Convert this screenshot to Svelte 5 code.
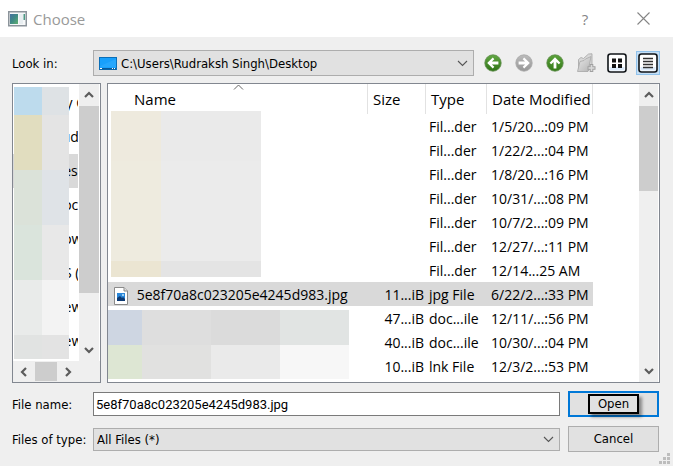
<script>
  const places = ['My C', 'Rud', 'Des', 'Doc', 'Dow', 'OS (', 'New', 'New'];

  const files = [
    { name: '', size: '', type: 'Fil...der', date: '1/5/20...:09 PM' },
    { name: '', size: '', type: 'Fil...der', date: '1/22/2...:04 PM' },
    { name: '', size: '', type: 'Fil...der', date: '1/8/20...:16 PM' },
    { name: '', size: '', type: 'Fil...der', date: '10/31/...:08 PM' },
    { name: '', size: '', type: 'Fil...der', date: '10/7/2...:09 PM' },
    { name: '', size: '', type: 'Fil...der', date: '12/27/...:11 PM' },
    { name: '', size: '', type: 'Fil...der', date: '12/14...25 AM' },
    { name: '5e8f70a8c023205e4245d983.jpg', size: '11...iB', type: 'jpg File', date: '6/22/2...:33 PM', icon: true },
    { name: '', size: '47...iB', type: 'doc...ile', date: '12/11/...:56 PM', icon: true },
    { name: '', size: '40...iB', type: 'doc...ile', date: '10/30/...:04 PM' },
    { name: '', size: '10...iB', type: 'lnk File', date: '12/3/2...:53 PM' },
    { name: '', size: '', type: '', date: '', icon: true }
  ];

  let place = $state(2);
  let selected = $state(7);
  let fileName = $state('5e8f70a8c023205e4245d983.jpg');
</script>

{#snippet arrow(turn)}
  <svg class="arrow" width="12" height="12" viewBox="0 0 12 12" aria-hidden="true">
    <path d="M2 8 L6 4 L10 8" fill="none" stroke="#5c5c5c" stroke-width="2.2" transform="rotate({turn} 6 6)" />
  </svg>
{/snippet}

{#snippet chevron()}
  <svg class="chevron" width="11" height="7" viewBox="0 0 11 7" aria-hidden="true">
    <path d="M1 1 L5.5 5.5 L10 1" fill="none" stroke="#555" stroke-width="1.1" />
  </svg>
{/snippet}

{#snippet ball(light, dark, edge, turn)}
  <svg width="20" height="20" viewBox="0 0 20 20" aria-hidden="true">
    <defs>
      <linearGradient id="ball{turn}" x1="0" y1="0" x2="0" y2="1">
        <stop offset="0" stop-color={light} /><stop offset="1" stop-color={dark} />
      </linearGradient>
    </defs>
    <circle cx="10" cy="10" r="8.2" fill="url(#ball{turn})" stroke={edge} stroke-width="0.8" />
    <path d="M4.2 10 L9.8 4.6 L11.3 6.2 L8.9 8.6 H15.4 V11.4 H8.9 L11.3 13.8 L9.8 15.4 Z" fill="#fff" transform="rotate({turn} 10 10)" />
  </svg>
{/snippet}

<div class="window">
  <header class="titlebar">
    <svg width="19" height="16" viewBox="0 0 19 16" aria-hidden="true">
      <defs>
        <linearGradient id="screen" x1="0" y1="0" x2="1" y2="1">
          <stop offset="0" stop-color="#4470a0" /><stop offset=".5" stop-color="#3e8a84" /><stop offset="1" stop-color="#60b070" />
        </linearGradient>
      </defs>
      <rect x=".75" y=".75" width="17.5" height="14" fill="#f6f8f9" stroke="#8c949b" stroke-width="1.5" />
      <rect x="2" y="3" width="8" height="10" fill="url(#screen)" />
      <rect x="11" y="3" width="4" height="10" fill="#e8eef1" />
      <rect x="15.5" y="3" width="1.5" height="6" fill="#4c9a85" />
    </svg>
    <h1>Choose</h1>
    <button class="caption" aria-label="Help"><span aria-hidden="true">?</span></button>
    <button class="caption" aria-label="Close">
      <svg width="13" height="13" viewBox="0 0 13 13" aria-hidden="true"><path d="M.5 .5 L12.5 12.5 M12.5 .5 L.5 12.5" stroke="#858585" stroke-width="1.1" /></svg>
    </button>
  </header>

  <main>
    <div class="lookin">
      <label for="folder">Look in:</label>
      <div class="combo path">
        <svg class="desk" width="18" height="13" viewBox="0 0 18 13" aria-hidden="true">
          <rect x=".5" y=".5" width="17" height="12" fill="#18a0fb" stroke="#0b6fb8" />
          <path d="M1 9 L17 2 V10 H1 Z" fill="#32adff" opacity=".5" />
          <rect x="1" y="11" width="16" height="1.5" fill="#0a5a98" />
          <path d="M1 11.5 H3 M13 11.5 H14 M15 11.5 H16" stroke="#fff" />
        </svg>
        <select id="folder"><option>C:\Users\Rudraksh Singh\Desktop</option></select>
        {@render chevron()}
      </div>
      <nav class="tools" aria-label="Navigation">
        <button aria-label="Back">{@render ball('#63a844', '#2f7316', '#5f8d4c', 0)}</button>
        <button aria-label="Forward">{@render ball('#bcbcbc', '#979797', '#a8a8a8', 180)}</button>
        <button aria-label="Parent directory">{@render ball('#5ba23b', '#357a19', '#5f8d4c', 90)}</button>
        <button aria-label="Create new folder">
          <svg width="20" height="20" viewBox="0 0 20 20" aria-hidden="true">
            <defs>
              <linearGradient id="fold" x1="0" y1="0" x2="1" y2="1">
                <stop offset="0" stop-color="#e8e8e8" /><stop offset="1" stop-color="#b4b4b4" />
              </linearGradient>
            </defs>
            <path d="M2.5 17.5 V6.5 L5 4.5 L7.5 5.5 L12.5 1 L16 .8 V13 L12 18 Z" fill="#d8d8d8" stroke="#a5a5a5" stroke-width=".8" />
            <path d="M1.5 18.5 L4 8.5 L8 7.5 L9.5 6 L15 3.5 L12 18.5 Z" fill="url(#fold)" stroke="#a8a8a8" stroke-width=".8" />
            <path d="M15.5 11 V19 M11.5 15 H19.5" stroke="#a0a0a0" stroke-width="3.6" />
            <path d="M15.5 12 V18 M12.5 15 H18.5" stroke="#dadada" stroke-width="1.6" />
          </svg>
        </button>
        <button aria-label="List view">
          <svg width="20" height="20" viewBox="0 0 20 20" aria-hidden="true">
            <rect x="1" y="1" width="18" height="18" rx="2.5" fill="#fff" stroke="#101418" stroke-width="1.6" />
            <path d="M2.5 14 H17.5 V17.5 H2.5 Z" fill="#dcebfa" />
            <path d="M5 5.5 h4 v4 h-4 Z M11 5.5 h4 v4 h-4 Z M5 11 h4 v4 h-4 Z M11 11 h4 v4 h-4 Z" fill="#111" />
          </svg>
        </button>
        <button class="on" aria-label="Detail view" aria-pressed="true">
          <svg width="20" height="20" viewBox="0 0 20 20" aria-hidden="true">
            <rect x="1" y="1" width="18" height="18" rx="2.5" fill="#fff" stroke="#101418" stroke-width="1.6" />
            <path d="M2.5 14 H17.5 V17.5 H2.5 Z" fill="#dcebfa" />
            <path d="M5 5.5 H15 M5 8.5 H15 M5 11.5 H15 M5 14.5 H15" stroke="#333" stroke-width="1.5" />
          </svg>
        </button>
      </nav>
    </div>

    <div class="panes">
      <aside class="pane places">
        <div class="view">
          <ul>
            {#each places as text, i}
              <li><button class:current={place === i} onclick={() => (place = i)}>{text}</button></li>
            {/each}
          </ul>
          <div class="mask side">
            <i style="background:#bddbed"></i><i style="background:#dee2e5"></i>
            <i style="background:#e1ddbf"></i><i style="background:#e4e4e4"></i>
            <i style="background:#dbe2d9"></i><i style="background:#dfe3e7"></i>
            <i style="background:#dae4dc"></i><i style="background:#e8e8e8"></i>
            <i style="background:#e9ebea"></i><i style="background:#f3f3f3"></i>
            <i style="background:#e1e3e2"></i><i style="background:#e3e3e3"></i>
          </div>
        </div>
        <div class="vbar">
          {@render arrow(0)}
          <div class="thumb" style="flex-grow:186"></div>
          <div style="flex-grow:46"></div>
          {@render arrow(180)}
        </div>
        <div class="hbar">
          {@render arrow(270)}
          <div class="thumb"></div>
          {@render arrow(90)}
        </div>
      </aside>

      <section class="pane files">
        <div class="view">
          <table>
            <thead>
              <tr>
                <th class="name">
                  <svg class="sort" width="11" height="6" viewBox="0 0 11 6" aria-hidden="true"><path d="M1 5.5 L5.5 1 L10 5.5" fill="none" stroke="#666" /></svg>
                  Name
                </th>
                <th class="size">Size</th>
                <th class="type">Type</th>
                <th class="date">Date Modified</th>
              </tr>
            </thead>
            <tbody>
              {#each files as file, i}
                <tr class:selected={selected === i} onclick={() => (selected = i)}>
                  <td class="name">
                    {#if file.icon}
                      <svg width="14" height="18" viewBox="0 0 14 18" aria-hidden="true">
                        <path d="M.5 .5 H10 L13.5 4 V17.5 H.5 Z" fill="#fff" stroke="#8a8a8a" />
                        <path d="M10 .5 V4 H13.5" fill="#ddd" stroke="#8a8a8a" />
                        <rect x="3" y="6" width="8" height="8" fill="#2a86d8" />
                        <path d="M3 14 V11 L6 9 L8 11 L9 10 L11 12 V14 Z" fill="#0e3a73" />
                        <circle cx="9" cy="8" r="1" fill="#bfe6ff" />
                      </svg>
                    {/if}
                    {file.name}
                  </td>
                  <td class="size">{file.size}</td>
                  <td class="type">{file.type}</td>
                  <td class="date">{file.date}</td>
                </tr>
              {/each}
            </tbody>
          </table>
          <div class="mask folders">
            <i style="background:#eeeade"></i><i style="background:#eaeaea"></i>
            <i style="background:#eeebdf"></i><i style="background:#ebebeb"></i>
            <i style="background:#ebe5d2"></i><i style="background:#e4e4e4"></i>
          </div>
          <div class="mask docs">
            <i style="background:#ced6e2"></i><i style="background:#dedede"></i><i style="background:#dbdbdb"></i><i style="background:#e1e4e3"></i>
            <i style="background:#dde6d3"></i><i style="background:#e1e1e0"></i><i style="background:#eaeaea"></i><i style="background:#f7f7f7"></i>
          </div>
        </div>
        <div class="vbar">
          {@render arrow(0)}
          <div class="thumb" style="flex-grow:85"></div>
          <div style="flex-grow:169"></div>
          {@render arrow(180)}
        </div>
      </section>
    </div>

    <form class="fields" onsubmit={(e) => e.preventDefault()}>
      <label for="filename">File name:</label>
      <input id="filename" type="text" bind:value={fileName} />
      <button class="push open" type="submit"><span>Open</span></button>

      <label for="filetype">Files of type:</label>
      <div class="combo types">
        <select id="filetype"><option>All Files (*)</option></select>
        {@render chevron()}
      </div>
      <button class="push" type="button">Cancel</button>
    </form>
  </main>

  <svg class="grip" width="11" height="11" viewBox="0 0 11 11" aria-hidden="true">
    <path d="M8 0h3v3h-3z M4 4h3v3h-3z M8 4h3v3h-3z M0 8h3v3h-3z M4 8h3v3h-3z M8 8h3v3h-3z" fill="#bdbdbd" />
  </svg>
</div>

<style>
  .window {
    position: relative;
    display: flex;
    flex-direction: column;
    height: 100vh;
    background: #efefef;
    color: #000;
    font: 13px/16px "DejaVu Sans Condensed", "DejaVu Sans", sans-serif;
  }
  .window, .window * { box-sizing: border-box; }
  button, input, select { font: inherit; color: inherit; margin: 0; border-radius: 0; }
  button { padding: 0; border: 0; background: none; }
  label { padding-top: 2px; white-space: nowrap; }

  .titlebar {
    display: flex;
    align-items: center;
    height: 37px;
    padding: 0 1px 0 8px;
    background: #fff;
    color: #999;
    font-family: "Open Sans", sans-serif;
  }
  h1 { flex: 1; margin: 0 0 0 6px; font-size: 15px; line-height: 20px; font-weight: 400; }
  .caption { display: grid; place-items: center; width: 58px; height: 36px; color: #858585; font-size: 15px; }

  main {
    flex: 1;
    display: flex;
    flex-direction: column;
    min-height: 0;
    padding: 13px 13px 14px 12px;
  }

  .lookin { display: flex; align-items: center; height: 26px; margin-bottom: 7px; }
  .lookin label { width: 81px; }
  .combo { position: relative; flex: 1; }
  .combo select {
    display: block;
    width: 100%;
    appearance: none;
    border: 1px solid #adadad;
    background: #e1e1e1;
    padding: 2px 24px 0 3px;
  }
  .path select { height: 26px; padding-left: 27px; }
  .types select { height: 23px; }
  .chevron { position: absolute; right: 6px; top: 50%; margin-top: -3px; pointer-events: none; }
  .desk { position: absolute; left: 6px; top: 7px; pointer-events: none; }

  .tools { display: flex; gap: 7px; margin-left: 7px; }
  .tools button { display: grid; place-items: center; width: 24px; height: 24px; }
  .tools .on { background: #c5dff5; border: 1px solid #90c2ec; }

  .panes { flex: 1; display: flex; gap: 6px; min-height: 0; }
  .pane {
    display: grid;
    grid-template-rows: minmax(0, 1fr);
    border: 1px solid #828790;
    background: #fff;
    font: 14px/20px "Open Sans", sans-serif;
  }
  .places { width: 89px; grid-template: minmax(0, 1fr) 21px / minmax(0, 1fr) 21px; }
  .files { flex: 1; grid-template-columns: minmax(0, 1fr) 20px; }
  .view { position: relative; overflow: hidden; }

  ul { list-style: none; margin: 0; padding: 2px 1px 0 0; }
  li button { display: block; width: 100%; height: 34px; padding-left: 40px; text-align: left; white-space: nowrap; overflow: hidden; }
  li .current { background: #d9d9d9; }

  .vbar { display: flex; flex-direction: column; align-items: center; margin-right: 1px; background: #efefef; }
  .vbar .arrow { flex: none; margin: 5px 4px; }
  .vbar .thumb { width: 100%; }
  .thumb { background: #cdcdcd; }
  .hbar { grid-column: 1 / 3; display: flex; align-items: center; background: #efefef; }
  .hbar .thumb { width: 22px; height: 19px; }
  .hbar .arrow { flex: none; margin: 0 5px; }

  .mask { position: absolute; display: grid; pointer-events: none; }
  .side { left: 1px; top: 3px; grid-template: 28px 55px 55px 55px 55px 24px / 28px 27px; }
  .folders { left: 3px; top: 27px; grid-template: 50px 100px 16px / 50px 100px; }
  .docs { left: 0; top: 226px; grid-template: 35px 34px / 34px 69px 69px 69px; }

  table { width: calc(100% - 46px); table-layout: fixed; border-collapse: separate; border-spacing: 0; }
  th, td { padding: 0; text-align: left; font-weight: 400; white-space: nowrap; overflow: hidden; }
  th { position: relative; height: 30px; border-right: 1px solid #e2e2e2; font-size: 15px; }
  td { height: 24px; padding-top: 2px; }
  .selected td { background: #d9d9d9; }
  th.name { padding-left: 26px; }
  th.size { width: 58px; padding-left: 5px; }
  th.type { width: 61px; padding-left: 5px; }
  th.date { width: 106px; padding-left: 5px; }
  td.name { padding-left: 6px; }
  td.name svg { display: inline-block; vertical-align: middle; margin: 0 5px 0 0; }
  td.size { padding-right: 2px; text-align: right; }
  td.type { padding-left: 3px; }
  td.date { padding-left: 4px; }
  .sort { position: absolute; left: 50%; top: 0; margin-left: -5px; }

  .fields {
    display: grid;
    grid-template: 26px 26px / 73px minmax(0, 1fr) 91px;
    gap: 9px 8px;
    align-items: center;
    margin: 8px 1px 0 0;
  }
  .fields input {
    width: 100%;
    height: 24px;
    padding: 1px 2px 0;
    border: 1px solid #7a7a7a;
    background: #fff;
    font-family: Roboto, sans-serif;
  }
  .push { height: 26px; border: 1px solid #adadad; background: #e1e1e1; }
  .open { border: 2px solid #0078d7; }
  .open span {
    display: inline-block;
    border: 2px solid #000;
    padding: 0 8px;
    box-shadow: 3px 3px 3px rgba(0, 0, 0, 0.4);
  }
  .grip { position: absolute; right: 3px; bottom: 2px; }
</style>
